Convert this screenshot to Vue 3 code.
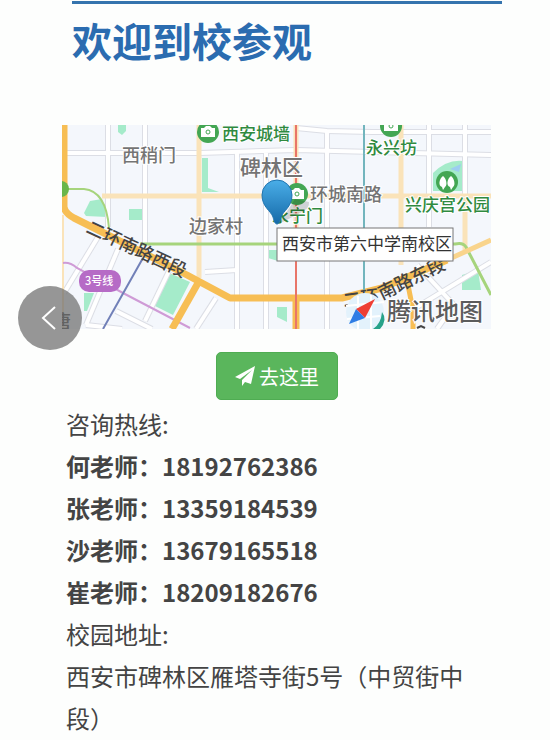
<script setup>
import { ref } from 'vue'

// teachers that answer the phone
const teachers = ref([
    { name: '何老师', phone: '18192762386' },
    { name: '张老师', phone: '13359184539' },
    { name: '沙老师', phone: '13679165518' },
    { name: '崔老师', phone: '18209182676' }
])

const address = '西安市碑林区雁塔寺街5号（中贸街中段）'

// small streets, drawn as a grey casing with a white line on top
const streets = [
    'M0 28H137L234 25L429 30',
    'M46 0V102',
    'M83 0V119',
    'M175 28V204',
    'M204 28V204',
    'M265 5V204',
    'M234 3L265 6L310 7L429 7',
    'M367 0V102',
    'M403 0V71',
    'M143 147L175 145',
    'M36 112L2 168',
    'M56 124L24 200',
    'M24 200L60 204',
    'M54 186L90 204',
    'M107 146L83 196',
    'M154 173L134 204',
    'M355 140L392 180L375 204',
    'M350 185L429 137'
]

const parks = [
    'M56 0H64V6L60 10L56 7Z',
    'M22 88L28 76L40 74L45 92L24 91Z',
    'M67 84H81V95H67Z',
    'M140 33H146V63L157 67H140Z',
    'M371 48Q385 34 401 36V66H371Z',
    'M105 147L128 157L111 190L91 180Z',
    'M22 168H32L25 186H22Z',
    'M206 125H216V136L206 133Z',
    'M215 182H225V197L215 192Z',
    'M400 150L416 145L419 165H400Z'
]

// camera badges of the sights
const cameras = [
    { x: 146, y: 7 },
    { x: 235, y: 69 },
    { x: 329, y: 1 }
]

const areas = [
    { text: '西稍门', x: 60, y: 37, size: 18 },
    { text: '碑林区', x: 178, y: 50, size: 21 },
    { text: '环城南路', x: 248, y: 76, size: 18 },
    { text: '边家村', x: 127, y: 108, size: 18 }
]

const sights = [
    { text: '西安城墙', x: 160, y: 15 },
    { text: '永宁门', x: 210, y: 97 },
    { text: '永兴坊', x: 304, y: 29 },
    { text: '兴庆宫公园', x: 343, y: 86 }
]
</script>


<template>
    <main class="page">
        <h1 class="title">欢迎到校参观</h1>

        <!-- map of the neighbourhood -->
        <svg class="map" viewBox="0 0 429 204" role="img" aria-label="腾讯地图">
            <rect width="429" height="204" fill="#f4f7fc" />
            <path v-for="d in parks" :key="d" :d="d" fill="#a5ebca" />
            <path d="M388 44L399 39L397 47Z" fill="#9ccdf0" />

            <g fill="none">
                <path v-for="d in streets" :key="d" :d="d" stroke="#dcdee5" stroke-width="6" />
                <path v-for="d in streets" :key="d" :d="d" stroke="#fff" stroke-width="4" />

                <g stroke="#fae3b9" stroke-width="5">
                    <path d="M40 71H429" />
                    <path d="M137 0V153" />
                    <path d="M234 0V120" />
                    <path d="M339 0V140" />
                    <path d="M403 71V125" />
                    <path d="M1 90V204" stroke-width="2" />
                </g>

                <path d="M78 119H393Q401 117 404 122L429 170" stroke="#a6d47c" stroke-width="3" />
                <path d="M6 64H22Q44 66 47 103" stroke="#a6d47c" stroke-width="2" />
                <path d="M1 138Q8 137 15 143L61 168L128 203" stroke="#cf9bd6" stroke-width="2" />

                <g stroke="#f7be54" stroke-width="7" stroke-linejoin="round">
                    <path d="M2 0V82Q3 88 12 93L38 106L125 150L168 173H280L320 163L385 135" />
                    <path d="M385 135L429 115" stroke="#f9d48c" stroke-width="5" />
                    <path d="M136 158L110 204" />
                    <path d="M234 173V204" />
                    <path d="M345 155L351 185V204" stroke-width="5" />
                </g>

                <path d="M81 133L41 204" stroke="#7180b8" stroke-width="2" />
                <path d="M234 0V204" stroke="#e87569" stroke-width="2" />
                <path d="M302 0V168" stroke="#72b5bd" stroke-width="2" />
            </g>

            <circle cx="-1" cy="64" r="8" fill="#69b64a" />

            <rect x="17" y="145" width="42" height="22" rx="10" fill="#b66bc6" />
            <text class="metro" x="23" y="160">3号线</text>

            <g v-for="c in cameras" :key="c.x">
                <circle :cx="c.x" :cy="c.y" r="11" fill="#43a653" />
                <path :transform="`translate(${c.x} ${c.y})`" d="M-7 -4H-4L-2 -6H2L4 -4H7V5H-7Z" fill="#fff" />
                <circle :cx="c.x" :cy="c.y" r="2" fill="#fff" stroke="#43a653" stroke-width="1" />
            </g>
            <circle cx="385" cy="57" r="11" fill="#43a653" />
            <path d="M381 51C377 54 376 61 380 62L381 65L383 62C386 60 384 53 381 51Z" fill="#fff" />
            <path d="M389 51C385 54 384 61 388 62L389 65L391 62C394 60 392 53 389 51Z" fill="#fff" />

            <text
                v-for="a in areas"
                :key="a.text"
                class="area"
                :x="a.x"
                :y="a.y"
                :font-size="a.size"
            >{{ a.text }}</text>
            <text v-for="s in sights" :key="s.text" class="sight" :x="s.x" :y="s.y">{{ s.text }}</text>

            <text class="road" transform="translate(23 107) rotate(25)">二环南路西段</text>
            <text class="road" transform="translate(282 182) rotate(-8)">二环</text>
            <text class="road" transform="translate(320 175) rotate(-26)">南路东段</text>
            <text class="road" x="-9" y="203">唐</text>
            <path d="M355 203L359 201L363 203" fill="none" stroke="#444" stroke-width="2" />

            <!-- pin -->
            <defs>
                <linearGradient id="pin" x1="0" y1="0" x2="0" y2="1">
                    <stop offset="0" stop-color="#4aaee8" />
                    <stop offset="1" stop-color="#1569a8" />
                </linearGradient>
            </defs>
            <path d="M217 99L233 74L247 77Q248 84 238 88Z" fill="#000" opacity="0.15" />
            <path
                d="M215 99C213 99 212 96 211 92C209 86 200 82 200 70A15 15 0 0 1 230 70C230 82 221 86 219 92C218 96 217 99 215 99Z"
                fill="url(#pin)"
                stroke="#1f74b0"
            />

            <rect x="215" y="103" width="176" height="33" fill="#fff" stroke="#777" />
            <text class="callout" x="220" y="125">西安市第六中学南校区</text>

            <!-- map logo -->
            <circle cx="303" cy="187" r="19" fill="#e3f2fc" />
            <path d="M284 181L322 177M285 194L318 191M296 171V204M309 170V204" stroke="#fff" stroke-width="2" />
            <path d="M320 187Q326 195 318 204H311Q319 199 320 187Z" fill="#27a28a" />
            <path d="M313 174L294 184L303 193Z" fill="#ee3f35" />
            <path d="M287 199L294 184L303 193Z" fill="#2f7de5" />
            <text class="brand" x="325" y="195">腾讯地图</text>
        </svg>

        <button class="go" type="button">
            <svg class="plane" viewBox="0 0 20 20" aria-hidden="true">
                <path d="M20 0L0 11L5 13L17 4L7 14V20L10 16L16 18Z" fill="#fff" />
            </svg>
            去这里
        </button>

        <!-- phone numbers and address -->
        <section class="info">
            <p>咨询热线:</p>
            <p v-for="teacher in teachers" :key="teacher.phone" class="teacher">
                {{ teacher.name }}：<a :href="'tel:' + teacher.phone">{{ teacher.phone }}</a>
            </p>
            <p>校园地址:</p>
            <p>{{ address }}</p>
        </section>

        <button class="back" type="button" aria-label="返回">
            <svg viewBox="0 0 64 64" aria-hidden="true">
                <path d="M37 21L25 32L37 43" fill="none" stroke="#fff" stroke-width="2" />
            </svg>
        </button>
    </main>
</template>


<style>
    body {
        background-color: #fdfefd;
    }
</style>

<style scoped>
    .page {
        display: flex;
        flex-direction: column;
        padding-top: 1px;
        font-family: "Noto Sans CJK SC", sans-serif;
        color: #444;
    }

    .title {
        margin: 0 48px 0 72px;
        border-top: 3px solid #3574ae;
        padding-top: 8px;
        font-size: 40px;
        line-height: 56px;
        font-weight: 700;
        color: #2b6cb0;
    }

    .map {
        display: block;
        margin: 57px 59px 0 62px;
        overflow: hidden;
    }

    .map text {
        font-weight: 500;
    }

    .map .area {
        fill: #747474;
    }

    .map .sight {
        font-size: 17px;
        fill: #2f8a40;
    }

    .map .area,
    .map .sight,
    .map .brand {
        stroke: #fff;
        stroke-width: 2px;
        paint-order: stroke;
    }

    .map .road {
        font-size: 18px;
        fill: #444;
    }

    .map .metro {
        font-size: 11px;
        fill: #fff;
    }

    .map .callout {
        font-size: 17px;
        font-weight: 400;
        fill: #333;
    }

    .map .brand {
        font-size: 24px;
        fill: #5c5c5c;
    }

    .go {
        display: flex;
        align-items: center;
        align-self: center;
        gap: 4px;
        margin-top: 23px;
        margin-left: 4px;
        height: 48px;
        padding: 0 18px;
        border: 1px solid #4fac52;
        border-radius: 5px;
        background-color: #5ab65c;
        color: #fff;
        font-family: inherit;
        font-size: 20px;
    }

    .plane {
        width: 20px;
        height: 20px;
    }

    .info {
        margin: 3px 68px 0 66px;
        font-size: 24px;
        line-height: 42px;
    }

    .info p {
        margin: 0;
    }

    .info .teacher {
        font-weight: 700;
    }

    .info a {
        color: inherit;
        text-decoration: none;
    }

    /* floats over the page */
    .back {
        position: fixed;
        top: 286px;
        left: 18px;
        width: 64px;
        height: 64px;
        padding: 0;
        border: 0;
        border-radius: 50%;
        background-color: rgba(110, 110, 110, 0.72);
    }

    .back svg {
        display: block;
        width: 64px;
        height: 64px;
    }
</style>
